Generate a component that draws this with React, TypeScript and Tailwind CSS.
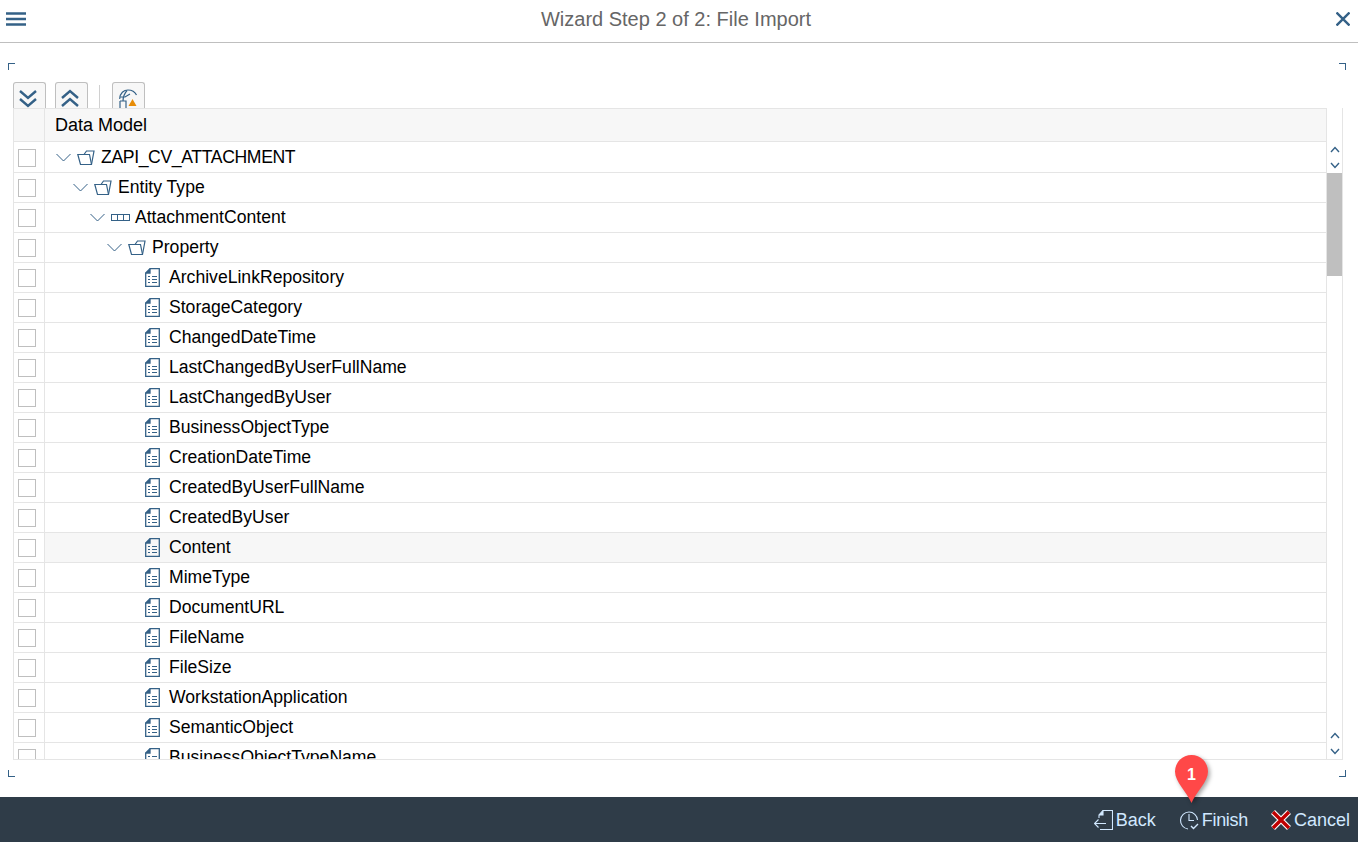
const rows: { label: string; level: number; kind: "folder" | "entity" | "leaf"; hover?: boolean; tight?: boolean }[] = [
  { label: "ZAPI_CV_ATTACHMENT", level: 0, kind: "folder", tight: true },
  { label: "Entity Type", level: 1, kind: "folder" },
  { label: "AttachmentContent", level: 2, kind: "entity" },
  { label: "Property", level: 3, kind: "folder" },
  { label: "ArchiveLinkRepository", level: 4, kind: "leaf" },
  { label: "StorageCategory", level: 4, kind: "leaf" },
  { label: "ChangedDateTime", level: 4, kind: "leaf" },
  { label: "LastChangedByUserFullName", level: 4, kind: "leaf" },
  { label: "LastChangedByUser", level: 4, kind: "leaf" },
  { label: "BusinessObjectType", level: 4, kind: "leaf" },
  { label: "CreationDateTime", level: 4, kind: "leaf" },
  { label: "CreatedByUserFullName", level: 4, kind: "leaf" },
  { label: "CreatedByUser", level: 4, kind: "leaf" },
  { label: "Content", level: 4, kind: "leaf", hover: true },
  { label: "MimeType", level: 4, kind: "leaf" },
  { label: "DocumentURL", level: 4, kind: "leaf" },
  { label: "FileName", level: 4, kind: "leaf" },
  { label: "FileSize", level: 4, kind: "leaf" },
  { label: "WorkstationApplication", level: 4, kind: "leaf" },
  { label: "SemanticObject", level: 4, kind: "leaf" },
  { label: "BusinessObjectTypeName", level: 4, kind: "leaf" },
]

const BLUE = "#346187"

function Chevron() {
  return (
    <svg width="15" height="9" viewBox="0 0 15 9" fill="none" stroke={BLUE} strokeWidth="1" className="shrink-0">
      <path d="M0.5 1 L7.5 8 L14.5 1" />
    </svg>
  )
}

function FolderIcon() {
  return (
    <svg width="18" height="16" viewBox="0 0 18 16" fill="none" stroke={BLUE} strokeWidth="1.2" className="shrink-0">
      <path d="M3.5 4.5 L0.8 4.5 L3.5 14.5 L14.5 14.5 L17 1 L9.5 1 L7 4.5 L3.5 4.5" />
      <path d="M14.5 14.5 L12.5 4.5 L7 4.5" />
    </svg>
  )
}

function EntityIcon() {
  return (
    <svg width="19" height="7" viewBox="0 0 19 7" fill="none" stroke={BLUE} strokeWidth="1" className="shrink-0">
      <rect x="0.5" y="0.5" width="18" height="6" />
      <path d="M6.5 0.5 V6.5 M12.5 0.5 V6.5" />
    </svg>
  )
}

function LeafIcon() {
  return (
    <svg width="15" height="19" viewBox="0 0 15 19" fill="none" stroke={BLUE} strokeWidth="1.3" className="shrink-0">
      <path d="M5 0.7 H14.3 V18.3 H0.7 V5 Z" />
      <path d="M5 0.7 V5 H0.7" fill={BLUE} />
      <path d="M3 8.5 H5 M7 8.5 H12 M3 11.5 H5 M7 11.5 H12 M3 14.5 H5 M7 14.5 H12" strokeWidth="1" />
    </svg>
  )
}

function Corner({ className }: { className: string }) {
  return <div className={`h-[7px] w-[7px] border-[#346187] ${className}`} />
}

function ToolButton({ children }: { children: React.ReactNode }) {
  return (
    <div className="flex h-[26px] w-[33px] items-start justify-center overflow-hidden rounded-t-[3px] border border-b-0 border-[#bfbfbf] bg-[#f7f7f7] pt-[3px]">
      {children}
    </div>
  )
}

function ScrollArrows() {
  return (
    <div className="flex h-[31px] shrink-0 flex-col items-center justify-between py-[4px]">
      <svg width="10" height="7" viewBox="0 0 10 7" fill="none" stroke={BLUE} strokeWidth="1.4">
        <path d="M1 6 L5 1.5 L9 6" />
      </svg>
      <svg width="10" height="7" viewBox="0 0 10 7" fill="none" stroke={BLUE} strokeWidth="1.4">
        <path d="M1 1 L5 5.5 L9 1" />
      </svg>
    </div>
  )
}

export default function App() {
  return (
    <div className="flex h-[842px] w-[1358px] flex-col overflow-hidden bg-white font-['Liberation_Sans',sans-serif] text-[18px] text-black">
      <header className="flex h-[43px] shrink-0 items-center justify-between border-b border-[#bfbfbf] pl-[6px] pr-[8px]">
        <svg width="20" height="14" viewBox="0 0 20 14" stroke={BLUE} strokeWidth="2.4" className="mb-[5px]">
          <path d="M0 1.5 H20 M0 7 H20 M0 12.5 H20" />
        </svg>
        <div className="mb-[4px] mr-[10px] text-[20px] text-[#666666]">Wizard Step 2 of 2: File Import</div>
        <svg width="14" height="14" viewBox="0 0 14 14" stroke={BLUE} strokeWidth="2.4" className="mb-[5px]">
          <path d="M0.5 0.5 L13.5 13.5 M13.5 0.5 L0.5 13.5" />
        </svg>
      </header>

      <main className="flex flex-1 flex-col pt-[20px]">
        <div className="flex justify-between pl-[8px] pr-[12px]">
          <Corner className="border-l border-t" />
          <Corner className="border-r border-t" />
        </div>

        <div className="mt-[12px] flex h-[26px] items-start pl-[13px]">
          <ToolButton>
            <svg width="20" height="22" viewBox="0 0 20 22" fill="none" stroke={BLUE} strokeWidth="2.4" className="mr-[3px] shrink-0">
              <path d="M2 5 L10 12 L18 5 M2 13 L10 20 L18 13" />
            </svg>
          </ToolButton>
          <div className="ml-[9px]">
            <ToolButton>
              <svg width="20" height="22" viewBox="0 0 20 22" fill="none" stroke={BLUE} strokeWidth="2.4" className="mr-[3px] shrink-0">
                <path d="M2 12 L10 5 L18 12 M2 20 L10 13 L18 20" />
              </svg>
            </ToolButton>
          </div>
          <div className="ml-[11px] mt-[3px] h-[23px] w-px bg-[#d0d0d0]" />
          <div className="ml-[12px]">
            <ToolButton>
              <svg width="20" height="22" viewBox="0 0 20 22" fill="none" className="shrink-0">
                <path d="M0.7 13 C0.7 7 5 4 9 4 C13 4 16 6 17.5 9" stroke={BLUE} strokeWidth="1.2" />
                <path d="M8 4.5 C5 8 4 12 4 15 M0.7 11 H6 L11 8 M1 15 H7 V22 M1 15 V22" stroke={BLUE} strokeWidth="1.2" />
                <path d="M13.5 13 L17.5 20 H9.5 Z" fill="#e78c07" />
              </svg>
            </ToolButton>
          </div>
        </div>

        <div className="ml-[13px] flex h-[652px] w-[1330px] overflow-hidden border-x border-b border-[#e5e5e5]">
          <div className="min-w-0 flex-1 overflow-hidden">
            <div className="flex h-[34px] border-y border-[#e5e5e5] bg-[#f7f7f7]">
              <div className="w-[31px] shrink-0 border-r border-[#e5e5e5]" />
              <div className="flex items-center pl-[10px]">Data Model</div>
            </div>
            <div className="flex h-px">
              <div className="w-[31px] shrink-0 border-r border-[#e5e5e5]" />
            </div>
            {rows.map((row) => (
              <div key={row.label} className={`flex h-[30px] shrink-0 border-b border-[#e5e5e5] text-[17.6px] ${row.hover ? "bg-[#f7f7f7]" : ""}`}>
                <div className="flex w-[31px] shrink-0 items-center border-r border-[#e5e5e5] bg-white pl-[4px]">
                  <div className="h-[18px] w-[18px] border border-[#bfbfbf] bg-white" />
                </div>
                {row.kind === "leaf" ? (
                  <div className="flex items-center pl-[100px]">
                    <LeafIcon />
                    <span className="ml-[9px]">{row.label}</span>
                  </div>
                ) : (
                  <div className="flex items-center" style={{ paddingLeft: 11 + row.level * 17 }}>
                    <Chevron />
                    <div className="ml-[6px] flex w-[18px] shrink-0 justify-center">{row.kind === "folder" ? <FolderIcon /> : <EntityIcon />}</div>
                    <span className={row.tight ? "ml-[6px] tracking-[-0.36px]" : "ml-[6px]"}>{row.label}</span>
                  </div>
                )}
              </div>
            ))}
          </div>
          <div className="flex w-[16px] shrink-0 flex-col border-l border-[#e5e5e5]">
            <div className="h-[34px] shrink-0" />
            <ScrollArrows />
            <div className="h-[103px] shrink-0 bg-[#bfbfbf]" />
            <div className="flex-1" />
            <ScrollArrows />
          </div>
        </div>

        <div className="mt-[10px] flex justify-between pl-[8px] pr-[12px]">
          <Corner className="border-b border-l" />
          <Corner className="border-b border-r" />
        </div>
      </main>

      <footer className="relative flex h-[45px] shrink-0 items-center justify-end bg-[#2f3c48] pr-[8px] pt-px text-[#d1e8ff]">
        <div className="flex items-center">
          <svg width="19" height="20" viewBox="0 0 19 20" fill="none" stroke="#d1e8ff" strokeWidth="1.1">
            <path d="M5 8 V5 L9 0.5 H18.5 V19.5 H6" />
            <path d="M9 0.5 V5 H5" fill="#d1e8ff" />
            <path d="M0.5 13.5 H12 M4.5 9.5 L0.5 13.5 L4.5 17.5" />
          </svg>
          <span className="ml-[3px]">Back</span>
        </div>
        <div className="ml-[23px] flex items-center">
          <svg width="20" height="20" viewBox="0 0 20 20" fill="none" stroke="#d1e8ff" strokeWidth="1.1">
            <path d="M9 19 A8.5 8.5 0 1 1 18.5 10" />
            <path d="M10 4 V10.5 H15" />
            <path d="M12 16 L14.5 18.5 L19 14" strokeWidth="1.4" />
          </svg>
          <span className="ml-[3px] tracking-[-0.3px]">Finish</span>
        </div>
        <div className="ml-[23px] flex items-center">
          <svg width="20" height="20" viewBox="0 0 20 20" fill="none">
            <path d="M2 2 L18 18 M18 2 L2 18" stroke="#ffffff" strokeWidth="5.6" />
            <path d="M2 2 L18 18 M18 2 L2 18" stroke="#c00000" strokeWidth="3.4" />
          </svg>
          <span className="ml-[3px]">Cancel</span>
        </div>

        {/* numbered callout over the Finish button */}
        <div className="absolute left-[1174px] top-[-43px] h-[50px] w-[35px]">
          <svg width="35" height="50" viewBox="0 0 35 50" className="drop-shadow-[2px_2px_2px_rgba(0,0,0,0.35)]">
            <path d="M17.5 49 C13 38 1 28 1 17.5 A16.5 16.5 0 0 1 34 17.5 C34 28 22 38 17.5 49 Z" fill="#ff4848" />
          </svg>
          <span className="absolute left-0 top-[11px] w-full text-center text-[16px] font-bold leading-[20px] text-white">1</span>
        </div>
      </footer>
    </div>
  )
}
